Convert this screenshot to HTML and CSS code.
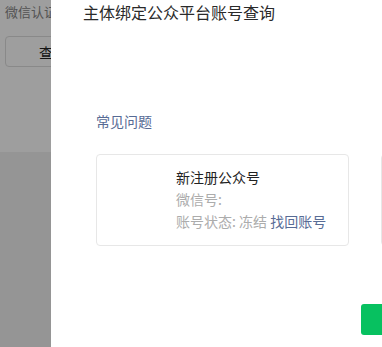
FILE: index.html
```html
<!DOCTYPE html>
<html lang="zh-CN">
<head>
  <meta charset="UTF-8">
  <meta name="viewport" content="width=device-width, initial-scale=1">
  <title>主体绑定公众平台账号查询</title>
  <link rel="stylesheet" href="styles.css">
</head>
<body>
  <!-- Page behind the drawer -->
  <div class="page">
    <div class="page-head">
      <div class="page-title">微信认证</div>
      <button class="query-btn">查询</button>
    </div>
    <div class="page-body"></div>
  </div>

  <!-- Mask -->
  <div class="mask"></div>

  <!-- Drawer -->
  <div class="drawer">
    <h2 class="drawer-title">主体绑定公众平台账号查询</h2>

    <div class="faq"><a href="#">常见问题</a></div>

    <div class="card-list">
      <div class="card">
        <div class="avatar"></div>
        <div class="card-info">
          <div class="name">新注册公众号</div>
          <div class="meta">微信号:</div>
          <div class="meta">账号状态: 冻结 <a href="#">找回账号</a></div>
        </div>
      </div>
      <div class="card"></div>
    </div>

    <div class="drawer-foot">
      <button class="btn-primary" aria-label="确定"></button>
    </div>
  </div>
</body>
</html>
```

FILE: styles.css
```css
/* Global Styles */
* {
  box-sizing: border-box;
  margin: 0;
  padding: 0;
  font-family: "Noto Sans CJK SC", "Noto Sans", sans-serif;
}
html, body {
  width: 100%;
  height: 100%;
  overflow: hidden;
}
body {
  position: relative;
  color: #333;
  background: #f0f0f0;
}
a {
  color: #576b95;
  text-decoration: none;
}

/* Background page */
.page-head {
  background: #fff;
  height: 152px;
  padding: 3px 5px;
}
.page-title {
  font-size: 13px;
  line-height: 18px;
  color: #888;
}
.query-btn {
  margin-top: 15px;
  width: 96px;
  height: 31px;
  border: 1px solid #ddd;
  border-radius: 4px;
  background: #fff;
  font-size: 14px;
  color: #222;
}

/* Mask */
.mask {
  position: absolute;
  inset: 0;
  background: rgba(0, 0, 0, 0.38);
}

/* Drawer */
.drawer {
  position: absolute;
  top: 0;
  bottom: 0;
  left: 51px;
  width: 420px;
  background: #fff;
  padding: 2px 0 0 32px;
}
.drawer-title {
  font-size: 16px;
  font-weight: normal;
  line-height: 20px;
  color: #2a2a2a;
}
.faq {
  margin: 87px 0 0 13px;
  font-size: 14px;
  line-height: 24px;
}
.card-list {
  display: flex;
  gap: 32px;
  margin: 21px 0 0 13px;
}
.card {
  display: flex;
  flex-shrink: 0;
  width: 253px;
  height: 92px;
  border: 1px solid #e7e7e7;
  border-radius: 4px;
  padding: 11px 0 0 19px;
}
.avatar {
  width: 60px;
  flex-shrink: 0;
}
.card-info {
  font-size: 14px;
  line-height: 22px;
}
.name {
  color: #222;
}
.meta {
  color: #acacac;
}
.drawer-foot {
  display: flex;
  margin: 58px 0 0 278px;
}
.btn-primary {
  width: 96px;
  height: 31px;
  border: none;
  border-radius: 3px;
  background: #07c160;
}
```
